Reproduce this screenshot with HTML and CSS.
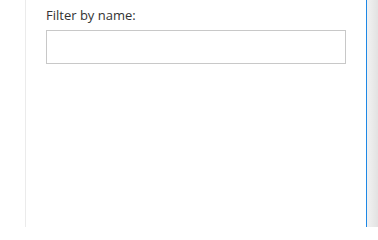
FILE: index.html
```html
<!DOCTYPE html>
<html>
<head>
<meta charset="utf-8">
<link rel="stylesheet" href="styles.css">
</head>
<body>
<div class="layout">
  <div class="rail"></div>
  <div class="panel">
    <label class="label" for="filter">Filter by name:</label>
    <input class="input" id="filter" type="text">
  </div>
  <div class="gutter"></div>
</div>
</body>
</html>
```

FILE: styles.css
```css
html, body {
  margin: 0;
  padding: 0;
  background: #ffffff;
}
.layout {
  display: flex;
  width: 378px;
  height: 227px;
}
.rail {
  width: 25px;
  flex: none;
  border-right: 1px solid #ebebeb;
}
.panel {
  flex: 1;
  display: flex;
  flex-direction: column;
  padding: 6px 20px 0 20px;
  border-right: 1px solid #1e88e5;
}
.label {
  font-family: "Open Sans", "Noto Sans", sans-serif;
  font-size: 13px;
  line-height: 18px;
  color: #333333;
  margin-bottom: 6px;
}
.input {
  box-sizing: border-box;
  width: 300px;
  height: 34px;
  margin: 0;
  border: 1px solid #c8c8c8;
  border-radius: 0;
  background: #ffffff;
  padding: 0 8px;
  outline: none;
}
.gutter {
  width: 11px;
  flex: none;
  background: linear-gradient(to right, #f2f2f2, #e2e2e2);
}
```
